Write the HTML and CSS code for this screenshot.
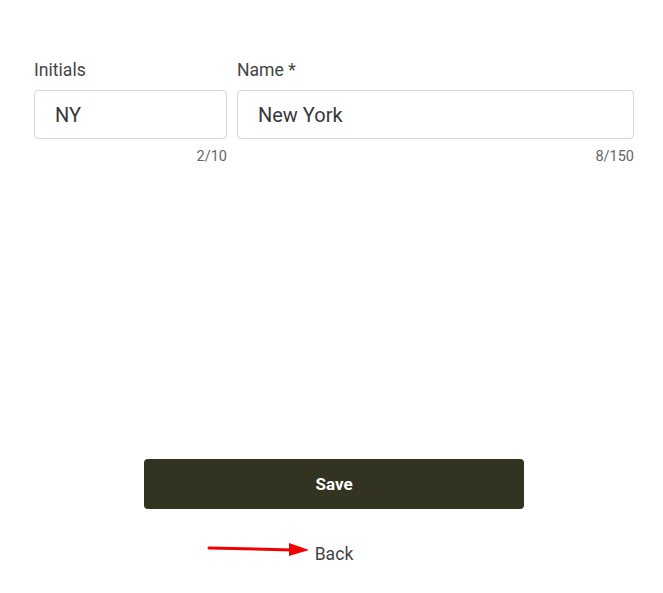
FILE: index.html
```html
<!DOCTYPE html>
<html>
<head>
<meta charset="utf-8">
<link rel="stylesheet" href="styles.css">
</head>
<body>
<div class="page">
  <div class="fields">
    <div class="field initials">
      <label class="label">Initials</label>
      <div class="input">NY</div>
      <div class="counter">2/10</div>
    </div>
    <div class="field name">
      <label class="label">Name *</label>
      <div class="input">New York</div>
      <div class="counter">8/150</div>
    </div>
  </div>
  <div class="actions">
    <button class="save">Save</button>
    <div class="back">Back</div>
  </div>
</div>
<svg class="arrow" width="110" height="20" viewBox="0 0 110 20">
  <path d="M2 9 L86 11" stroke="#f00000" stroke-width="3" stroke-linecap="round" fill="none"/>
  <polygon points="82,4 102,11 82,17" fill="#f00000"/>
</svg>
</body>
</html>
```
FILE: styles.css
```css
html, body {
  margin: 0;
  padding: 0;
  background: #fff;
}
body {
  font-family: Roboto, "Liberation Sans", sans-serif;
  color: #3f3f3f;
  position: relative;
  width: 663px;
  height: 593px;
  overflow: hidden;
}
.page {
  width: 600px;
  padding: 58px 0 0 34px;
}
.fields {
  display: flex;
  gap: 10px;
}
.field {
  display: flex;
  flex-direction: column;
}
.initials { width: 193px; }
.name { flex: 1; }
.label {
  font-size: 17.6px;
  line-height: 24px;
  color: #444;
  margin-bottom: 8px;
}
.input {
  box-sizing: border-box;
  height: 49px;
  border: 1px solid #d6d6d6;
  border-radius: 4px;
  padding: 0 20px;
  font-size: 20px;
  line-height: 48px;
  color: #383838;
}
.counter {
  text-align: right;
  font-size: 14.5px;
  line-height: 16px;
  margin-top: 10px;
  color: #666;
}
.actions {
  margin-top: 294px;
  display: flex;
  flex-direction: column;
  align-items: center;
}
.save {
  width: 380px;
  height: 50px;
  background: #323421;
  color: #fff;
  border: none;
  border-radius: 4px;
  font-family: Roboto, "Liberation Sans", sans-serif;
  font-weight: 700;
  font-size: 17px;
  cursor: pointer;
}
.back {
  margin-top: 34px;
  font-size: 17.6px;
  line-height: 22px;
  color: #444;
}
.arrow {
  position: absolute;
  left: 207px;
  top: 539px;
}
```
